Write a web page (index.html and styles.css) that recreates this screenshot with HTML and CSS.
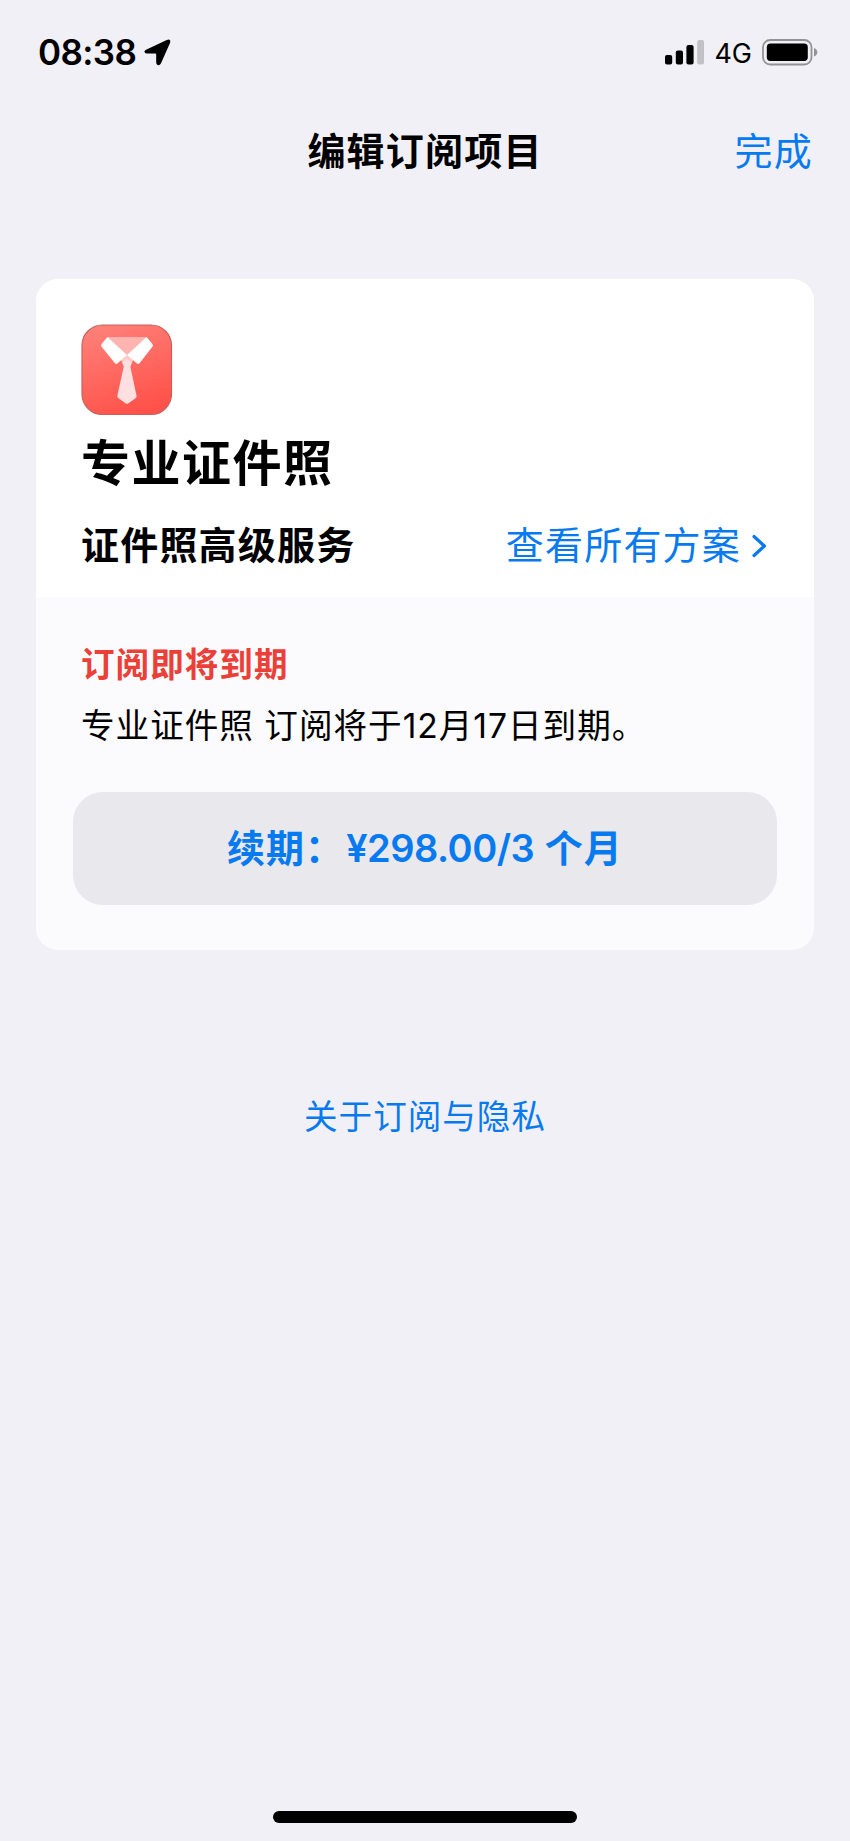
FILE: index.html
```html
<!DOCTYPE html>
<html lang="zh-CN">
<head>
    <meta charset="UTF-8">
    <meta name="viewport" content="width=device-width, initial-scale=1.0">
    <title>编辑订阅项目</title>
    <link rel="stylesheet" href="styles.css">
</head>
<body>
    <div class="status-bar">
        <div class="status-left">
            <span class="time">08:38</span>
            <svg class="location" width="27" height="27" viewBox="0 0 27 27">
                <path d="M2 10.8 L22.8 1 Q27.4 -0.6 26 4 L17 24.2 Q15.6 27 13.6 26 Q12.2 25.2 12.2 23.6 V15.6 Q12.2 14.6 11.2 14.6 H2.8 Q0.6 14.4 0.4 12.8 Q0.4 11.6 2 10.8 Z"/>
            </svg>
        </div>
        <div class="status-right">
            <svg class="signal" width="39" height="25" viewBox="0 0 39 25">
                <rect x="0" y="15" width="7.2" height="9.5" rx="2"/>
                <rect x="10.8" y="10.5" width="7.2" height="14" rx="2"/>
                <rect x="21.4" y="5" width="7.2" height="19.5" rx="2"/>
                <rect x="32.2" y="0" width="6.8" height="24.5" rx="2" fill="#c2c1c6"/>
            </svg>
            <span class="network">4G</span>
            <svg class="battery" width="56" height="27" viewBox="0 0 56 27">
                <rect x="1" y="1" width="48.5" height="24.5" rx="7.2" fill="none" stroke="#929196" stroke-width="1.8"/>
                <rect x="4.8" y="4.6" width="41" height="17.3" rx="3.6"/>
                <path d="M52 9 Q55.3 10.4 55.3 13.2 Q55.3 16 52 17.5 Z" fill="#929196"/>
            </svg>
        </div>
    </div>

    <div class="nav">
        <h1>编辑订阅项目</h1>
        <a class="done" href="#">完成</a>
    </div>

    <div class="card">
        <div class="card-top">
            <svg class="app-icon" width="92" height="92" viewBox="0 0 92 92">
                <defs>
                    <linearGradient id="red" x1="0.25" y1="0" x2="0.6" y2="1">
                        <stop offset="0" stop-color="#ff8078"/>
                        <stop offset="1" stop-color="#ff5149"/>
                    </linearGradient>
                </defs>
                <rect x="1" y="1" width="89.5" height="89.5" rx="20.5" fill="url(#red)" stroke="#c9605c" stroke-width="1.2"/>
                <path d="M26 13 H66 L46 32 Z" fill="#ffb4b0"/>
                <path d="M40.3 36 L46 31 L52 36 L49.4 42.7 L55.5 71.5 Q56 73 54.5 74.2 L47.5 79.2 Q46 80.2 44.5 79.2 L37.5 74.2 Q36 73 36.4 71.5 L42.7 42.7 Z" fill="#ffdfdf"/>
                <path d="M40.3 36 L46 31 L52 36 L50.8 39 L46 34.8 L41.5 39 Z" fill="#ffcac8"/>
                <path d="M26.4 13 L46 31 L36.4 39.6 Q35 40.6 33.9 39.2 L20.4 22.5 Q19.6 21.1 20.6 20 Z" fill="#fff"/>
                <path d="M65.6 13 L46 31 L56 39.6 Q57.4 40.6 58.5 39.2 L71.6 22.5 Q72.4 21.1 71.4 20 Z" fill="#fff"/>
            </svg>
            <h2>专业证件照</h2>
            <div class="plan">
                <h3>证件照高级服务</h3>
                <a href="#">查看所有方案<svg class="chevron" width="15" height="24" viewBox="0 0 15 24"><path d="M2 2.5 L12.4 12 L2 21.5"/></svg></a>
            </div>
        </div>
        <div class="card-bottom">
            <p class="warning">订阅即将到期</p>
            <p class="expire">专业证件照 订阅将于12月17日到期。</p>
            <button class="renew">续期：<span class="price">¥298.00/3</span> 个月</button>
        </div>
    </div>

    <a class="privacy" href="#">关于订阅与隐私</a>

    <div class="home-bar"></div>
</body>
</html>
```

FILE: styles.css
```css
* {
    box-sizing: border-box;
}
body {
    margin: 0;
    height: 1841px;
    display: flex;
    flex-direction: column;
    background-color: #f1f0f6;
    color: #000;
    font-family: Inter, "Noto Sans CJK SC", sans-serif;
}
h1, h2, h3, p {
    margin: 0;
}
a {
    color: #087af0;
    text-decoration: none;
}
svg {
    display: block;
    flex: none;
}
.status-bar {
    height: 104px;
    padding: 0 32px 0 38px;
    display: flex;
    justify-content: space-between;
    align-items: center;
}
.status-left, .status-right {
    display: flex;
    align-items: center;
}
.time {
    font-size: 35px;
    font-weight: 600;
    line-height: 40px;
    letter-spacing: -0.6px;
}
.location {
    margin-left: 8px;
}
.network {
    font-size: 27px;
    line-height: 40px;
    margin: 3px 10px 0 10px;
}
.nav {
    height: 92px;
    padding: 1px 37px 0;
    display: grid;
    grid-template-columns: 1fr auto 1fr;
    align-items: center;
    font-size: 38px;
    letter-spacing: 1.2px;
    line-height: 50px;
}
.nav h1 {
    grid-column: 2;
    font-size: 38px;
    font-weight: 600;
}
.done {
    text-align: right;
}
.card {
    margin: 83px 36px 0;
    height: 671px;
    border-radius: 22px;
    overflow: hidden;
    background-color: #fbfafd;
}
.card-top {
    height: 318px;
    padding: 45px 47px 0 45px;
    background-color: #fff;
}
.card-top h2 {
    margin-top: 18px;
    font-size: 49px;
    font-weight: 600;
    line-height: 60px;
    letter-spacing: 1.5px;
}
.plan {
    margin-top: 26px;
    display: flex;
    justify-content: space-between;
    font-size: 38px;
    line-height: 50px;
    letter-spacing: 1.2px;
}
.plan h3 {
    font-size: 38px;
    font-weight: 600;
}
.plan a {
    display: flex;
    align-items: center;
}
.chevron {
    margin: 2px 0 0 11px;
    fill: none;
    stroke: #087af0;
    stroke-width: 3.2;
    stroke-linecap: round;
    stroke-linejoin: round;
}
.card-bottom {
    padding: 47px 37px 0;
    font-size: 33.6px;
    line-height: 42px;
    letter-spacing: 1px;
}
.card-bottom p {
    padding-left: 8px;
}
.warning {
    color: #eb4037;
    font-weight: 600;
}
.expire {
    margin-top: 19px;
}
.renew {
    display: block;
    width: 704px;
    height: 113px;
    margin-top: 45px;
    padding: 0 0 1px;
    border: none;
    border-radius: 30px;
    background-color: #e9e8ed;
    color: #087af0;
    font-family: inherit;
    font-size: 38px;
    font-weight: 600;
    line-height: 50px;
    letter-spacing: 1px;
}
.price {
    margin-left: 2px;
    letter-spacing: -0.5px;
}
.privacy {
    margin-top: 146px;
    text-align: center;
    font-size: 33.6px;
    line-height: 42px;
    letter-spacing: 1px;
}
.home-bar {
    width: 304px;
    height: 12px;
    margin: auto auto 18px;
    border-radius: 6px;
    background-color: #000;
}
```
